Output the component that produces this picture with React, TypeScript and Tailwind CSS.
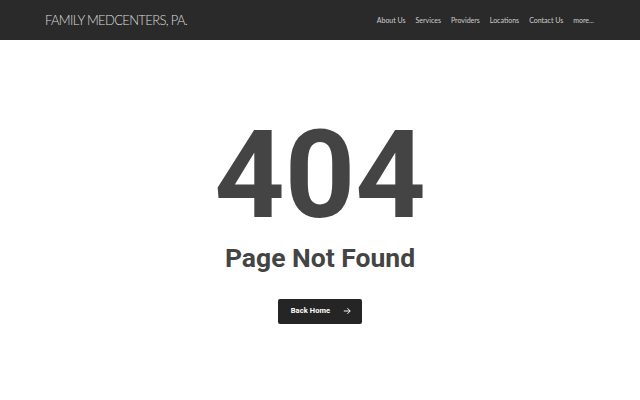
import React from "react";

export default function App() {
  const nav = ["About Us", "Services", "Providers", "Locations", "Contact Us", "more..."];
  return (
    <div className="w-[640px] h-[400px] bg-white flex flex-col" style={{ fontFamily: "Roboto, sans-serif" }}>
      <header className="h-[40px] bg-[#2a2a2a] flex items-center justify-between pl-[45px] pr-[46px] shrink-0">
        <div
          className="text-[#dcdcdc] text-[13px] font-light tracking-[-0.65px] uppercase leading-none"
          style={{ fontFamily: "Lato, sans-serif" }}
        >
          FAMILY MEDCENTERS, PA.
        </div>
        <nav className="flex gap-[10px] text-[7px] text-[#cfcfcf]" style={{ fontFamily: "Lato, sans-serif" }}>
          {nav.map((n) => (
            <span key={n}>{n}</span>
          ))}
        </nav>
      </header>
      <main className="flex-1 flex flex-col items-center">
        <div className="mt-[80px] text-[123px] font-bold leading-[110px] text-[#444444]">404</div>
        <div className="mt-[15px] text-[26.5px] font-bold leading-none text-[#444444]">Page Not Found</div>
        <button className="mt-[27px] w-[84px] h-[25px] bg-[#252525] rounded-[2px] flex items-center justify-center gap-[13px] pl-[2px] text-white">
          <span className="text-[7.5px] font-bold tracking-[0.1px]">Back Home</span>
          <svg width="8" height="8" viewBox="0 0 10 10" fill="none" stroke="white" strokeWidth="1.2">
            <path d="M1 5h8M5.5 1.5L9 5l-3.5 3.5" />
          </svg>
        </button>
      </main>
    </div>
  );
}
